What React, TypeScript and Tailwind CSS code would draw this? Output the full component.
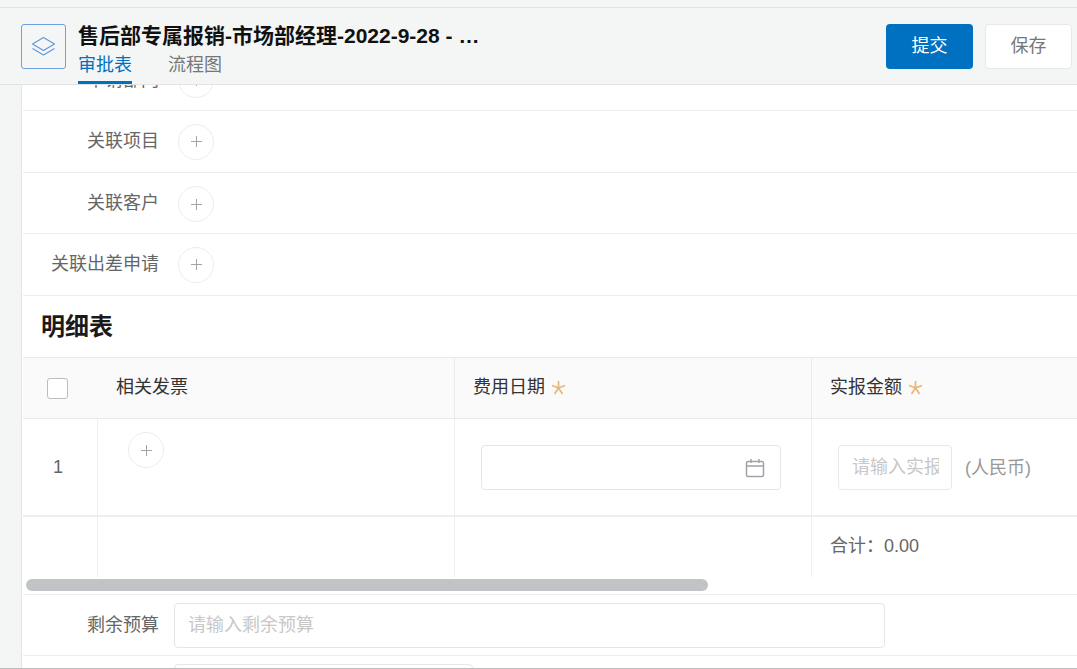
import React from 'react';

const fontStack = "font-['Liberation_Sans','Noto_Sans_CJK_SC',sans-serif]";

const PlusCircle = ({ size = 'w-[36px] h-[36px]' }: { size?: string }) => (
  <div className={`${size} rounded-full border border-[#ececec] bg-white flex items-center justify-center shrink-0`}>
    <svg width="13" height="13" viewBox="0 0 13 13" fill="none" stroke="#a3a3a3" strokeWidth="1">
      <path d="M6.5 1v11M1 6.5h11" />
    </svg>
  </div>
);

const LinkRow = ({ label, nudge }: { label: string; nudge?: boolean }) => (
  <div className={`${nudge ? 'h-[61px]' : 'h-[62px]'} flex items-center border-b border-[#eeeeee]`}>
    <span className="w-[136px] text-right text-[18px] text-[#666666] leading-none whitespace-nowrap pb-[1px]">{label}</span>
    <div className={nudge ? 'ml-[19px] mt-[2px]' : 'ml-[19px]'}>
      <PlusCircle />
    </div>
  </div>
);

const Star = () => (
  <svg width="15" height="15" viewBox="0 0 15 15" fill="none" stroke="#eab676" strokeWidth="1.7" className="ml-[6px]">
    <path d="M7.5 8V1M7.5 8L14 5.5M7.5 8L1 5.5M7.5 8L11.5 14M7.5 8L3.5 14" />
  </svg>
);

const App = () => {
  return (
    <div className={`${fontStack} w-[1077px] h-[669px] overflow-hidden bg-[#f4f6f6] flex flex-col`}>
      <div className="h-[8px] shrink-0 border-b border-[#e3e5e5]" />

      {/* Header */}
      <header className="h-[77px] shrink-0 border-b border-[#e3e5e5] flex pl-[21px] pr-[5px] bg-[#f4f6f6]">
        <div className="mt-[16px] w-[45px] h-[45px] rounded-[3px] border border-[#6b9fe0] flex items-center justify-center shrink-0">
          <svg width="25" height="21" viewBox="0 0 25 21" fill="none" stroke="#5c96de" strokeWidth="1.1" strokeLinejoin="round">
            <path d="M12.5 1.5L23.5 8l-11 6.5L1.5 8z" />
            <path d="M1.5 12.5l11 6.5 11-6.5" />
          </svg>
        </div>
        <div className="ml-[12px] flex flex-col w-[420px]">
          <div className="mt-[15px] text-[21px] font-bold leading-[26px] text-[#111111] whitespace-nowrap">
            售后部专属报销-市场部经理-2022-9-28 - …
          </div>
          <div className="mt-[3px] flex gap-[36px] text-[18px] leading-[26px]">
            <div className="relative w-[54px] h-[32px] text-[#0070c0] whitespace-nowrap">
              审批表
              <div className="absolute left-0 right-0 bottom-0 h-[3px] bg-[#0070c0]" />
            </div>
            <div className="text-[#777777] whitespace-nowrap">流程图</div>
          </div>
        </div>
        <div className="ml-auto mt-[16px] flex gap-[12px]">
          <button className="w-[87px] h-[45px] rounded-[4px] bg-[#0070c0] text-white text-[18px]">提交</button>
          <button className="w-[87px] h-[45px] rounded-[4px] bg-white border border-[#e8e8e8] text-[#777777] text-[18px]">保存</button>
        </div>
      </header>

      <div className="flex-1 min-h-0 flex pl-[21px]">
        <main className="flex-1 min-w-0 bg-white border-l border-[#e3e5e5] pl-[1px] overflow-hidden">
          {/* Row scrolled under the header */}
          <div className="h-[26px] overflow-hidden border-b border-[#eeeeee]">
            <div className="-mt-[36px] h-[62px] flex items-center">
              <span className="w-[136px] text-right text-[18px] text-[#666666] leading-none">申请部门</span>
              <div className="ml-[19px]">
                <PlusCircle />
              </div>
            </div>
          </div>
          <LinkRow label="关联项目" />
          <LinkRow label="关联客户" nudge />
          <LinkRow label="关联出差申请" />

          <h2 className="h-[61px] pl-[18px] flex items-center text-[24px] font-bold text-[#1a1a1a] leading-none">明细表</h2>

          {/* Detail table */}
          <div className="grid grid-cols-[75px_357px_357px_1fr] text-[#333333]">
            <div className="h-[62px] bg-[#fafafa] border-y border-[#eaeaea] flex items-center pl-[24px]">
              <div className="w-[21px] h-[21px] rounded-[3px] bg-white border border-[#bdbdbd]" />
            </div>
            <div className="h-[62px] bg-[#fafafa] border-y border-r border-[#eaeaea] flex items-center pl-[18px] pb-[2px] text-[18px]">相关发票</div>
            <div className="h-[62px] bg-[#fafafa] border-y border-r border-[#eaeaea] flex items-center pl-[18px] pb-[2px] text-[18px]">
              费用日期
              <Star />
            </div>
            <div className="h-[62px] bg-[#fafafa] border-y border-[#eaeaea] flex items-center pl-[18px] pb-[2px] text-[18px]">
              实报金额
              <Star />
            </div>

            <div className="h-[98px] border-b-2 border-r border-[#eeeeee] flex items-center pl-[30px] text-[18px] text-[#666666]">1</div>
            <div className="h-[98px] border-b-2 border-r border-[#eeeeee] pl-[30px] pt-[13px]">
              <PlusCircle />
            </div>
            <div className="h-[98px] border-b-2 border-r border-[#eeeeee] pl-[26px] pr-[30px] pt-[26px]">
              <div className="h-[45px] rounded-[4px] border border-[#e6e6e6] flex items-center justify-end pr-[15px]">
                <svg width="20" height="20" viewBox="0 0 20 20" fill="none" stroke="#a0a4a8" strokeWidth="1.5">
                  <rect x="1.5" y="3.5" width="17" height="15" rx="1.5" />
                  <path d="M1.5 8h17M6 1v4M14 1v4" />
                </svg>
              </div>
            </div>
            <div className="h-[98px] border-b-2 border-[#eeeeee] pl-[26px] pt-[26px] flex items-start">
              <div className="w-[114px] h-[45px] rounded-[4px] border border-[#e9e9e9] flex items-center pl-[13px] overflow-hidden text-[18px] text-[#c8c8c8] whitespace-nowrap">
                <span className="w-[87px] overflow-hidden">请输入实报金额</span>
              </div>
              <span className="ml-[13px] mt-[12px] text-[18px] leading-[22px] text-[#999999]">(人民币)</span>
            </div>

            <div className="h-[60px] border-r border-[#eeeeee]" />
            <div className="h-[60px] border-r border-[#eeeeee]" />
            <div className="h-[60px] border-r border-[#eeeeee]" />
            <div className="h-[60px] pl-[18px] pb-[2px] flex items-center text-[18px] text-[#666666]">合计：0.00</div>
          </div>

          {/* Table scrollbar */}
          <div className="h-[18px] border-b border-[#eeeeee] pl-[3px] pt-[2px]">
            <div className="w-[682px] h-[12px] rounded-full bg-[#c1c3c7]" />
          </div>

          <div className="h-[61px] flex items-center border-b border-[#eeeeee]">
            <span className="w-[136px] text-right text-[18px] text-[#666666] leading-none">剩余预算</span>
            <div className="ml-[15px] w-[711px] h-[45px] rounded-[4px] border border-[#e6e6e6] flex items-center pl-[13px] text-[18px] text-[#c8c8c8]">
              请输入剩余预算
            </div>
          </div>

          <div className="pl-[151px] pt-[8px]">
            <div className="w-[299px] h-[45px] rounded-[4px] border border-[#e6e6e6]" />
          </div>
        </main>
      </div>
      <div className="h-[1px] shrink-0 bg-[#bdbdbd] -mt-[1px] relative" />
    </div>
  );
};

export default App;
